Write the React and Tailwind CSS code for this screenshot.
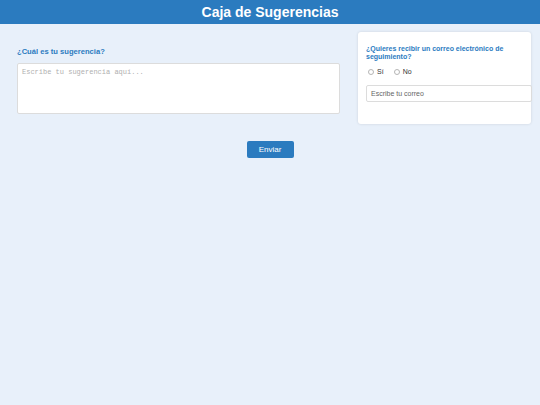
import React, { useState } from 'react';

const Radio = ({ checked, onChange, label }) => (
  <label className="flex items-center gap-[3px]">
    <input
      type="radio"
      name="follow"
      checked={checked}
      onChange={onChange}
      className="appearance-none w-[6px] h-[6px] m-0 rounded-full border border-[#b5b5b5] bg-white checked:border-[2px] checked:border-[#2b7bbf]"
    />
    {label}
  </label>
);

const App = () => {
  const [follow, setFollow] = useState('');

  return (
    <div className="min-h-[405px] w-full bg-[#e8f0fa] font-['Liberation_Sans',Arial,sans-serif]">
      <header className="h-6 bg-[#2b7bbf] flex items-center justify-center">
        <h1 className="text-[14px] font-bold text-white leading-none">Caja de Sugerencias</h1>
      </header>

      <div className="flex items-start gap-[18px] pl-[17px] pr-[9px] pt-2">
        <div className="flex-1 pt-[14px]">
          <label className="block text-[7.6px] font-bold text-[#2b7bbf] mb-[6px]">¿Cuál es tu sugerencia?</label>
          <textarea
            placeholder="Escribe tu sugerencia aquí..."
            className="block w-full h-[51px] bg-white border border-[#dcdcdc] rounded-[2px] px-[4px] py-[3px] text-[7px] font-['Liberation_Mono',monospace] placeholder:text-[#b0b0b0] resize-none outline-none"
          />
        </div>

        <div className="w-[173px] h-[92px] bg-white rounded-[3px] shadow-[0_0_3px_rgba(0,0,0,0.12)] pl-2 pt-[13px]">
          <p className="text-[7px] font-bold text-[#2b7bbf] leading-[8px]">¿Quieres recibir un correo electrónico de seguimiento?</p>
          <div className="flex items-center gap-[10px] mt-[6px] pl-[2px] text-[7px] text-[#333]">
            <Radio checked={follow === 'si'} onChange={() => setFollow('si')} label="Sí" />
            <Radio checked={follow === 'no'} onChange={() => setFollow('no')} label="No" />
          </div>
          <input
            type="email"
            placeholder="Escribe tu correo"
            className="block mt-[7px] w-[166px] h-[17px] border border-[#dcdcdc] rounded-[2px] px-[4px] text-[7px] placeholder:text-[#666] outline-none bg-white"
          />
        </div>
      </div>

      <div className="flex justify-center mt-[17px]">
        <button className="w-[47px] h-[17px] bg-[#2b7bbf] text-white text-[8px] rounded-[2px]">Enviar</button>
      </div>
    </div>
  );
};

export default App;
